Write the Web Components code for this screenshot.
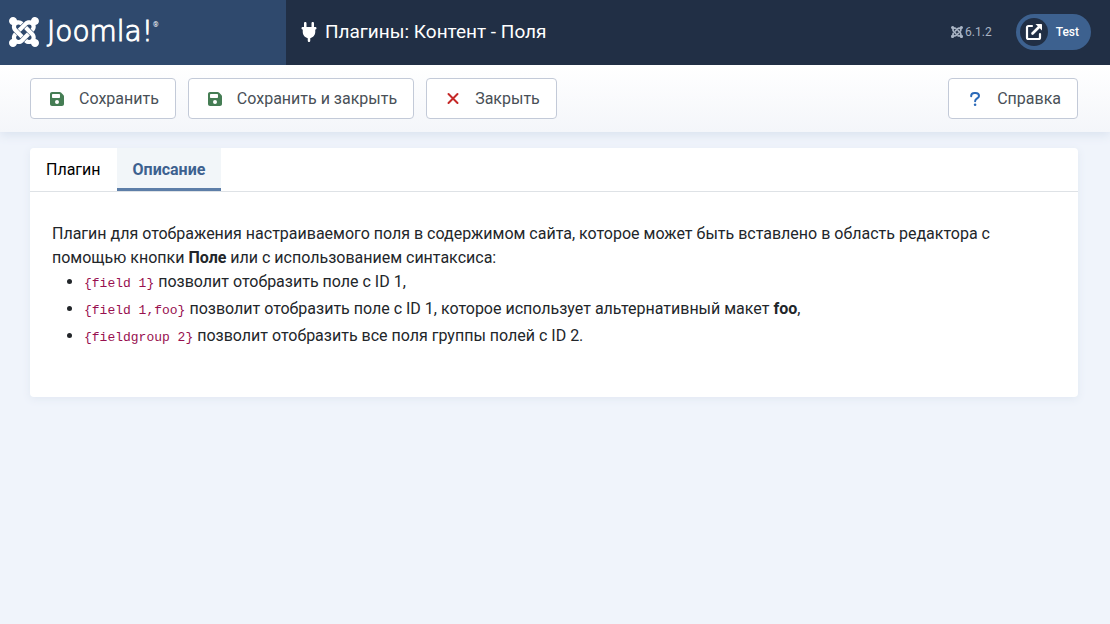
<!DOCTYPE html>
<html lang="ru">
<head>
<meta charset="utf-8">
<meta name="viewport" content="width=device-width, initial-scale=1">
<title>Плагины: Контент - Поля</title>
<style>
body{margin:0;background:#f0f4fb;color:#22262a;font:16px/24px Roboto,"Noto Sans",sans-serif}
ul{margin:0;padding-left:32px}
li{line-height:24px;margin-bottom:3px}
p{margin:0}
code{font:13px/16px "Liberation Mono",monospace;color:#98104f}
b{font-weight:700}
</style>
</head>
<body>
<admin-header version="6.1.2" site="Test">Плагины: Контент - Поля</admin-header>
<tool-bar>
  <tool-button icon="save">Сохранить</tool-button>
  <tool-button icon="save">Сохранить и закрыть</tool-button>
  <tool-button icon="close">Закрыть</tool-button>
  <tool-button icon="help" slot="end">Справка</tool-button>
</tool-bar>
<main>
<tab-card>
  <tab-item slot="tabs">Плагин</tab-item>
  <tab-item slot="tabs" active>Описание</tab-item>
  <p>Плагин для отображения настраиваемого поля в содержимом сайта, которое может быть вставлено в область редактора с помощью кнопки <b>Поле</b> или с использованием синтаксиса:</p>
  <ul>
    <li><code>{field 1}</code> позволит отобразить поле с ID 1,</li>
    <li><code>{field 1,foo}</code> позволит отобразить поле с ID 1, которое использует альтернативный макет <b>foo</b>,</li>
    <li><code>{fieldgroup 2}</code> позволит отобразить все поля группы полей с ID 2.</li>
  </ul>
</tab-card>
</main>
<script>
const ICONS = {
  joomla: ['0 32 448 448', '<path d="M.6 92.1C.6 58.8 27.4 32 60.4 32c30 0 54.5 21.9 59.2 50.2 32.6-7.6 67.1.6 96.5 30l-44.3 44.3c-20.5-20.5-42.6-16.3-55.4-3.5-14.3 14.3-14.3 37.9 0 52.2l99.5 99.5-44 44.3c-87.7-87.2-49.7-49.7-99.8-99.7-26.8-26.5-35-64.8-24.8-98.9C20.4 144.6.6 120.7.6 92.1zm129.5 116.4l44.3 44.3c10-10 89.7-89.7 99.7-99.8 14.3-14.3 37.6-14.3 51.9 0 12.8 12.8 17 35-3.5 55.4l44 44.3c31.2-31.2 38.5-67.6 28.9-101.2 29.2-4.1 51.9-29.2 51.9-59.5 0-33.2-26.8-60.1-59.8-60.1-30.3 0-55.4 22.5-59.5 51.6-33.8-9.9-71.7-1.5-98.3 25.1-18.3 19.1-71.1 71.5-99.6 99.9zm266.3 152.2c8.2-32.7-.9-68.5-26.3-93.9-11.8-12.2 5 4.7-99.5-99.7l-44.3 44.3 99.7 99.7c14.3 14.3 14.3 37.6 0 51.9-12.8 12.8-35 17-55.4-3.5l-44 44.3c27.6 30.2 68 38.8 102.7 28 5.5 27.4 29.7 48.1 58.9 48.1 33 0 59.8-26.8 59.8-60.1 0-30.2-22.5-55-51.6-59.1zm-84.3-53.1l-44-44.3c-87 86.4-50.4 50.4-99.7 99.8-14.3 14.3-37.6 14.3-51.9 0-13.1-13.4-16.9-35.3 3.2-55.4l-44-44.3c-30.2 30.2-38 65.2-29.5 98.3-26.7 6-46.2 29.9-46.2 58.2C0 453.2 26.8 480 59.8 480c28.6 0 52.5-19.8 58.6-46.7 32.7 8.2 68.5-.6 94.2-26 32.1-32 12.2-12.4 99.5-99.7z"/>'],
  plug: ['-64 0 512 512', '<path d="M96 0C78.300 0 64 14.300 64 32v96h64V32c0-17.700-14.300-32-32-32zM288 0c-17.700 0-32 14.300-32 32v96h64V32c0-17.700-14.300-32-32-32zM32 128c-17.700 0-32 14.300-32 32s14.300 32 32 32v64c0 77.400 55 142 128 156.800V480c0 17.700 14.300 32 32 32s32-14.300 32-32v-67.200C297 398 352 333.400 352 256v-64c17.700 0 32-14.300 32-32s-14.300-32-32-32H32z"/>'],
  save: ['0 32 448 448', '<path fill-rule="evenodd" d="M64 32C28.700 32 0 60.700 0 96v320c0 35.300 28.700 64 64 64h320c35.300 0 64-28.700 64-64V173.300c0-17-6.700-33.300-18.700-45.300L352 50.700C340 38.700 323.700 32 306.700 32H64zm0 96c0-17.700 14.300-32 32-32h192c17.700 0 32 14.300 32 32v64c0 17.700-14.300 32-32 32H96c-17.700 0-32-14.300-32-32v-64zM224 288a64 64 0 1 1 0 128 64 64 0 1 1 0-128z"/>'],
  close: ['0 0 14 14', '<path d="M2.500 2l9 9m0-9l-9 9" fill="none" stroke="currentColor" stroke-width="2" stroke-linecap="round"/>'],
  help: ['0 0 14 14', '<path d="M3.200 4.200V3.800C3.200 2 4.500 1 6.500 1h1C9.500 1 11 2.200 11 3.900c0 2.600-3.900 2.500-3.900 5.300" fill="none" stroke="currentColor" stroke-width="2" stroke-linecap="round"/><circle cx="7.100" cy="12.700" r="1.300"/>'],
  open: ['0 0 18 18', '<path d="M7 3H3.500C2.500 3 2 3.500 2 4.500v10C2 15.500 2.500 16 3.500 16h10c1 0 1.500-.5 1.500-1.500V11" fill="none" stroke="currentColor" stroke-width="2.200" stroke-linecap="round"/><path d="M7.500 10.500L14 4" fill="none" stroke="currentColor" stroke-width="2.600" stroke-linecap="round"/><path d="M10.500 1H16c.6 0 1 .4 1 1v5.500z"/>']
};
const svg = (name, size) => `<svg width="${size}" height="${size}" viewBox="${ICONS[name][0]}" fill="currentColor" aria-hidden="true">${ICONS[name][1]}</svg>`;

class Base extends HTMLElement {
  connectedCallback() {
    if (!this.shadowRoot) this.attachShadow({mode: 'open'}).innerHTML = this.view();
  }
}

customElements.define('admin-header', class extends Base {
  view() { return `<style>
    :host{display:flex;position:relative;z-index:1;height:65px;background:#212f45;color:#fff}
    svg{display:block;flex:none}
    .brand{box-sizing:border-box;width:286px;flex:none;display:flex;align-items:center;padding:0 0 2px 9px;background:#2f496d;color:#fff;text-decoration:none}
    .word{margin-left:8px;font:200 28px/32px "DejaVu Sans Light","DejaVu Sans",sans-serif;-webkit-text-stroke:1px #fff}
    sup{align-self:flex-start;margin-top:20px;font:7px/10px Roboto,sans-serif}
    h1{flex:1;display:flex;align-items:center;gap:6px;margin:0;padding:0 0 2px 13px;font-size:19px;font-weight:400;line-height:24px}
    .meta{display:flex;align-items:center;gap:24px;padding:0 19px 1px 0;font-size:12px}
    .version{display:flex;align-items:center;gap:2px;color:#a9b4c4}
    .site{display:flex;align-items:center;gap:8px;height:36px;box-sizing:border-box;padding:0 12px 0 4px;border-radius:18px;background:#3d618f;color:#fff;text-decoration:none;font-weight:500}
    .disc{display:grid;place-items:center;width:28px;height:28px;border-radius:50%;background:#212f45}
  </style>
  <a class="brand" href="#" aria-label="Joomla!">${svg('joomla', 30)}<span class="word">Joomla!</span><sup>®</sup></a>
  <h1>${svg('plug', 20)}<slot></slot></h1>
  <div class="meta"><span class="version">${svg('joomla', 12)}${this.getAttribute('version')}</span>
  <a class="site" href="#"><span class="disc">${svg('open', 18)}</span>${this.getAttribute('site')}</a></div>`; }
});

customElements.define('tool-bar', class extends Base {
  view() { return `<style>
    :host{display:flex;justify-content:space-between;padding:13px 32px 13px 30px;background:linear-gradient(#fff,#f4f6fa);box-shadow:0 3px 10px #d9e2ee}
    div{display:flex;gap:12px}
  </style><div><slot></slot></div><div><slot name="end"></slot></div>`; }
});

customElements.define('tool-button', class extends Base {
  view() { const icon = this.getAttribute('icon'); return `<style>
    :host{display:block}
    button{display:flex;align-items:center;height:41px;margin:0;padding:0 16px;border:1px solid #c3cad8;border-radius:4px;background:#fff;color:#495057;font:16px/24px Roboto,"Noto Sans",sans-serif}
    .icon{display:grid;place-items:center;width:20px;margin-right:12px}
    .save{color:#457d54}.close{color:#c52827}.help{color:#2a69b8}
  </style><button type="button"><span class="icon ${icon}">${svg(icon, 14)}</span><slot></slot></button>`; }
});

customElements.define('tab-card', class extends Base {
  view() { return `<style>
    :host{display:block;margin:16px 32px 32px 30px;background:#fff;border-radius:4px;box-shadow:0 2px 8px #e1e8f2}
    .tabs{display:flex;border-bottom:1px solid #dee2e6}
    .body{padding:30px 22px 46px}
  </style><div class="tabs" role="tablist"><slot name="tabs"></slot></div><div class="body" role="tabpanel"><slot></slot></div>`; }
});

customElements.define('tab-item', class extends Base {
  view() { const on = this.hasAttribute('active'); return `<style>
    :host{display:block}
    button{display:block;height:43px;margin:0;padding:0 16px;border:0;background:transparent;color:#000;font:16px/24px Roboto,"Noto Sans",sans-serif}
    .on{color:#3d618f;background:#f2f6f9;font-weight:700;box-shadow:inset 0 -3px #5d7ea8}
  </style><button type="button" role="tab" aria-selected="${on}" class="${on ? 'on' : ''}"><slot></slot></button>`; }
});
</script>
</body>
</html>
